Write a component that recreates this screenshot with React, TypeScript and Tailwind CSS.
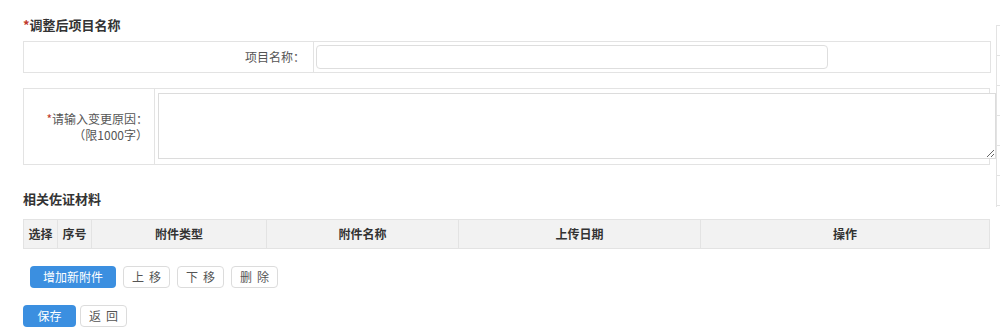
const font = { fontFamily: '"Noto Sans CJK SC", "Noto Sans", sans-serif' };

const columns = [
  { label: '选择', w: 'w-[34px]' },
  { label: '序号', w: 'w-[34px]' },
  { label: '附件类型', w: 'w-[175px]' },
  { label: '附件名称', w: 'w-[192px]' },
  { label: '上传日期', w: 'w-[242px]' },
  { label: '操作', w: 'flex-1' },
];

const GhostButton = ({ children }: { children: string }) => (
  <button className="flex h-[22px] w-[47px] items-center justify-center rounded-sm border border-[#dcdcdc] bg-white text-[12px] tracking-[5px] text-[#555] indent-[5px]">
    {children}
  </button>
);

const SectionTitle = ({ children, required }: { children: string; required?: boolean }) => (
  <h2 className="h-[18px] text-[13px] font-bold leading-[18px] text-[#333]">
    {required && <span className="text-[#c0392b]">*</span>}
    {children}
  </h2>
);

export default function App() {
  return (
    <div className="flex h-[336px] w-[1000px] overflow-hidden bg-white" style={font}>
      <div className="w-[996px] shrink-0 pl-[23px] pt-[16px]">
        <SectionTitle required>调整后项目名称</SectionTitle>

        {/* 项目名称 */}
        <div className="mt-[7px] flex h-[32px] w-[968px] border border-[#e3e3e3]">
          <div className="flex w-[290px] shrink-0 items-center justify-end border-r border-[#e3e3e3] pr-[8px] text-[12px] text-[#555]">
            项目名称：
          </div>
          <div className="flex items-center pl-[2px]">
            <input className="h-[24px] w-[512px] rounded-sm border border-[#dedede] bg-white outline-none" />
          </div>
        </div>

        {/* 变更原因 */}
        <div className="mt-[15px] flex h-[77px] w-[967px] border border-[#e3e3e3]">
          <div className="flex w-[131px] shrink-0 flex-col items-end justify-center border-r border-[#e3e3e3] pr-[6px] text-[12px] leading-[16px] text-[#555]">
            <span className="whitespace-nowrap">
              <span className="text-[#c0392b]">*</span>请输入变更原因：
            </span>
            <span className="whitespace-nowrap">（限1000字）</span>
          </div>
          <div className="min-w-0 pl-[3px] pt-[4px]">
            <textarea className="h-[66px] w-[838px] border border-[#dcdcdc] bg-white outline-none" />
          </div>
        </div>

        <div className="mt-[25px]">
          <SectionTitle>相关佐证材料</SectionTitle>
        </div>

        {/* 附件表头 */}
        <div className="mt-[11px] flex h-[30px] w-[967px] border border-[#e3e3e3] bg-[#f2f2f2]">
          {columns.map((c, i) => (
            <div
              key={c.label}
              className={`${c.w} flex items-center justify-center text-[12px] font-bold text-[#333] ${
                i < columns.length - 1 ? 'border-r border-[#e3e3e3]' : ''
              }`}
            >
              {c.label}
            </div>
          ))}
        </div>

        <div className="mt-[17px] flex gap-[7px] pl-[7px]">
          <button className="flex h-[22px] w-[86px] items-center justify-center rounded-sm bg-[#3b8fe0] text-[12px] text-white">
            增加新附件
          </button>
          <GhostButton>上移</GhostButton>
          <GhostButton>下移</GhostButton>
          <GhostButton>删除</GhostButton>
        </div>

        <div className="mt-[17px] flex gap-[4px]">
          <button className="flex h-[22px] w-[53px] items-center justify-center rounded-sm bg-[#3b8fe0] text-[12px] text-white">
            保存
          </button>
          <GhostButton>返回</GhostButton>
        </div>
      </div>

      {/* 右侧边栏 */}
      <div className="mt-[25px] flex h-[182px] w-[4px] flex-col border-l border-t border-[#e3e3e3]">
        {[0, 1, 2, 3, 4, 5].map((n) => (
          <div key={n} className="h-[30px] border-b border-[#e3e3e3]" />
        ))}
      </div>
    </div>
  );
}
